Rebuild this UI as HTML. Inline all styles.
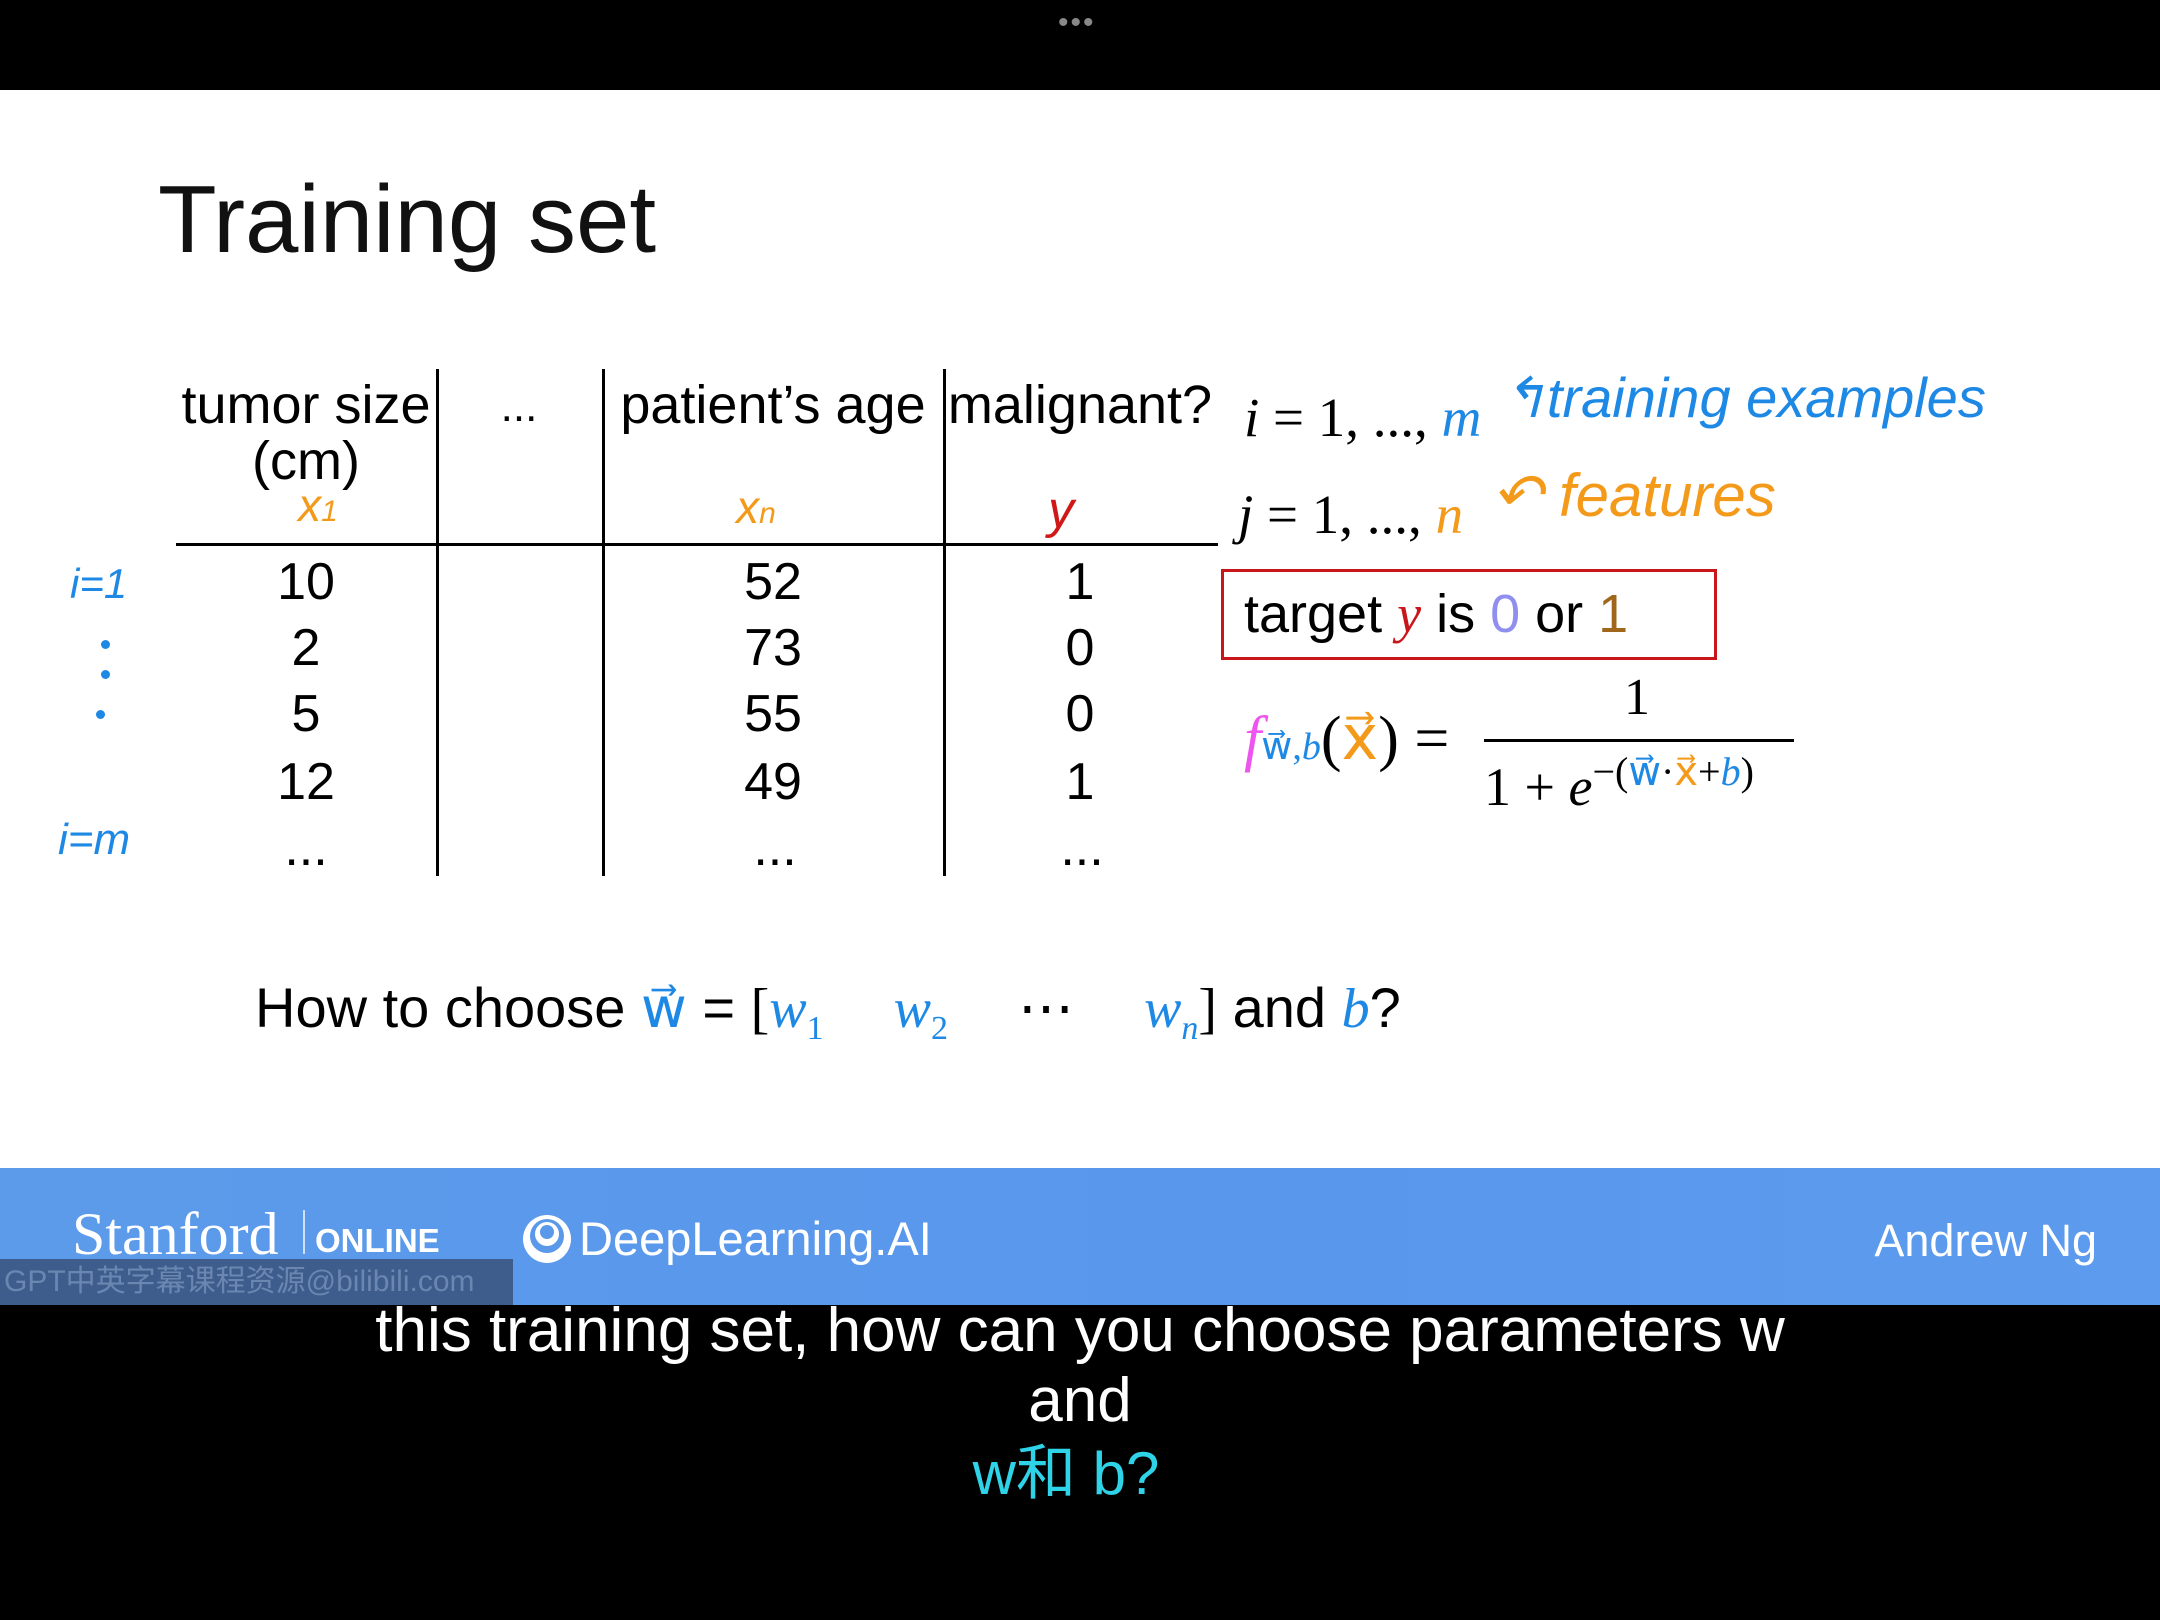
<!DOCTYPE html>
<html><head><meta charset="utf-8"><style>
*{margin:0;padding:0}
body{width:2160px;height:1620px;background:#000;position:relative;overflow:hidden;font-family:"Liberation Sans",sans-serif}
.a{position:absolute;white-space:nowrap;line-height:1}
.c{transform:translateX(-50%)}
.s{font-family:"Liberation Serif",serif}
.hand{font-family:"Liberation Sans",sans-serif;font-style:italic;font-weight:300}
.vl{position:absolute;width:3px;background:#000;top:369px;height:507px}
</style></head><body>
<div class="a" style="left:1058px;top:8px;color:#888;font-size:30px;letter-spacing:2px">•••</div>
<div style="position:absolute;left:0;top:90px;width:2160px;height:1078px;background:#fff"></div>
<div class="a" style="left:158px;top:172px;font-size:96px;color:#111">Training set</div>

<!-- table -->
<div style="position:absolute;left:176px;top:543px;width:1042px;height:3px;background:#000"></div>
<div class="vl" style="left:436px"></div>
<div class="vl" style="left:602px"></div>
<div class="vl" style="left:943px"></div>
<div class="a c" style="left:306px;top:378px;font-size:54px">tumor size</div>
<div class="a c" style="left:306px;top:434px;font-size:54px">(cm)</div>
<div class="a c hand" style="left:318px;top:482px;font-size:46px;color:#f39a1b">x<span style="font-size:30px">1</span></div>
<div class="a c" style="left:519px;top:385px;font-size:44px">...</div>
<div class="a c" style="left:773px;top:378px;font-size:54px">patient’s age</div>
<div class="a c hand" style="left:756px;top:484px;font-size:46px;color:#f39a1b">x<span style="font-size:30px">n</span></div>
<div class="a c" style="left:1080px;top:378px;font-size:54px">malignant?</div>
<div class="a c hand" style="left:1061px;top:484px;font-size:52px;color:#d01818">y</div>

<div class="a c" style="left:306px;top:556px;font-size:52px">10</div>
<div class="a c" style="left:306px;top:622px;font-size:52px">2</div>
<div class="a c" style="left:306px;top:688px;font-size:52px">5</div>
<div class="a c" style="left:306px;top:756px;font-size:52px">12</div>
<div class="a c" style="left:306px;top:822px;font-size:52px">...</div>
<div class="a c" style="left:773px;top:556px;font-size:52px">52</div>
<div class="a c" style="left:773px;top:622px;font-size:52px">73</div>
<div class="a c" style="left:773px;top:688px;font-size:52px">55</div>
<div class="a c" style="left:773px;top:756px;font-size:52px">49</div>
<div class="a c" style="left:775px;top:822px;font-size:52px">...</div>
<div class="a c" style="left:1080px;top:556px;font-size:52px">1</div>
<div class="a c" style="left:1080px;top:622px;font-size:52px">0</div>
<div class="a c" style="left:1080px;top:688px;font-size:52px">0</div>
<div class="a c" style="left:1080px;top:756px;font-size:52px">1</div>
<div class="a c" style="left:1082px;top:822px;font-size:52px">...</div>

<div class="a hand" style="left:70px;top:563px;font-size:42px;color:#1e88e5">i=1</div>
<div style="position:absolute;left:101px;top:640px;width:9px;height:9px;border-radius:50%;background:#1e88e5"></div>
<div style="position:absolute;left:101px;top:670px;width:9px;height:9px;border-radius:50%;background:#1e88e5"></div>
<div style="position:absolute;left:96px;top:710px;width:9px;height:9px;border-radius:50%;background:#1e88e5"></div>
<div class="a hand" style="left:58px;top:818px;font-size:44px;color:#1e88e5">i=m</div>

<!-- right side -->
<div class="a s" style="left:1244px;top:390px;font-size:55px"><i>i</i> = 1, ..., <i style="color:#1e88e5">m</i></div>
<div class="a hand" style="left:1500px;top:370px;font-size:56px;color:#1e88e5">↰training examples</div>
<div class="a s" style="left:1238px;top:487px;font-size:55px"><i>j</i> = 1, ..., <i style="color:#f39a1b">n</i></div>
<div class="a hand" style="left:1492px;top:466px;font-size:60px;color:#f39a1b">↶ features</div>
<div style="position:absolute;left:1221px;top:569px;width:490px;height:85px;border:3px solid #c8161b"></div>
<div class="a" style="left:1244px;top:587px;font-size:54px">target <i class="s" style="color:#c8161b">y</i> is <span style="color:#8f8fef">0</span> or <span style="color:#a0661c">1</span></div>
<div class="a s" style="left:1244px;top:708px;font-size:62px"><i style="color:#ee55ee">f</i><span style="font-size:38px;color:#1e88e5">w⃗,<i>b</i></span>(<span style="color:#f39a1b">x⃗</span>) =</div>
<div class="a c s" style="left:1637px;top:672px;font-size:52px">1</div>
<div style="position:absolute;left:1484px;top:739px;width:310px;height:3px;background:#000"></div>
<div class="a s" style="left:1484px;top:752px;font-size:54px">1 + <i>e</i><span style="font-size:40px;vertical-align:20px">−(<span style="color:#1e88e5">w⃗</span>·<span style="color:#f39a1b">x⃗</span>+<i style="color:#1e88e5">b</i>)</span></div>

<div class="a" style="left:255px;top:980px;font-size:56px">How to choose <span class="s" style="color:#1e88e5">w⃗</span> = <span class="s">[<i style="color:#1e88e5">w</i><sub style="font-size:34px;color:#1e88e5">1</sub>&nbsp;&nbsp;&nbsp;&nbsp; <i style="color:#1e88e5">w</i><sub style="font-size:34px;color:#1e88e5">2</sub>&nbsp;&nbsp;&nbsp;&nbsp; ⋯&nbsp;&nbsp;&nbsp;&nbsp; <i style="color:#1e88e5">w<sub style="font-size:34px">n</sub></i>]</span> and <i class="s" style="color:#1e88e5">b</i>?</div>

<!-- banner -->
<div style="position:absolute;left:0;top:1168px;width:2160px;height:137px;background:linear-gradient(90deg,#5c9aea,#5897ec 60%,#5d9bee)"></div>
<div class="a s" style="left:72px;top:1204px;font-size:60px;color:#fff">Stanford</div>
<div style="position:absolute;left:303px;top:1210px;width:2px;height:44px;background:#cfe0fa"></div>
<div class="a" style="left:315px;top:1224px;font-size:33px;color:#fff;font-weight:bold">ONLINE</div>
<svg style="position:absolute;left:520px;top:1212px" width="54" height="54" viewBox="0 0 54 54"><circle cx="27" cy="27" r="24" fill="#fff"/><circle cx="27" cy="24" r="17" fill="#5a98ea"/><circle cx="27" cy="22" r="12" fill="#fff"/><circle cx="27" cy="20" r="7" fill="#5a98ea"/></svg>
<div class="a" style="left:579px;top:1215px;font-size:47px;color:#fff">DeepLearning.AI</div>
<div class="a" style="right:63px;top:1218px;font-size:45px;color:#fff">Andrew Ng</div>
<div style="position:absolute;left:0;top:1259px;width:513px;height:46px;background:#3e5d8c"></div>
<div class="a" style="left:4px;top:1267px;font-size:30px;color:#6b86b0;font-family:'Liberation Sans','Noto Sans CJK SC',sans-serif">GPT中英字幕课程资源@bilibili.com</div>

<!-- subtitles -->
<div class="a c" style="left:1080px;top:1300px;font-size:62px;color:#fff">this training set, how can you choose parameters w</div>
<div class="a c" style="left:1080px;top:1370px;font-size:62px;color:#fff">and</div>
<div class="a c" style="left:1066px;top:1444px;font-size:60px;color:#2fd3e8;font-family:'Liberation Sans','Noto Sans CJK SC',sans-serif">w和 b?</div>
</body></html>
